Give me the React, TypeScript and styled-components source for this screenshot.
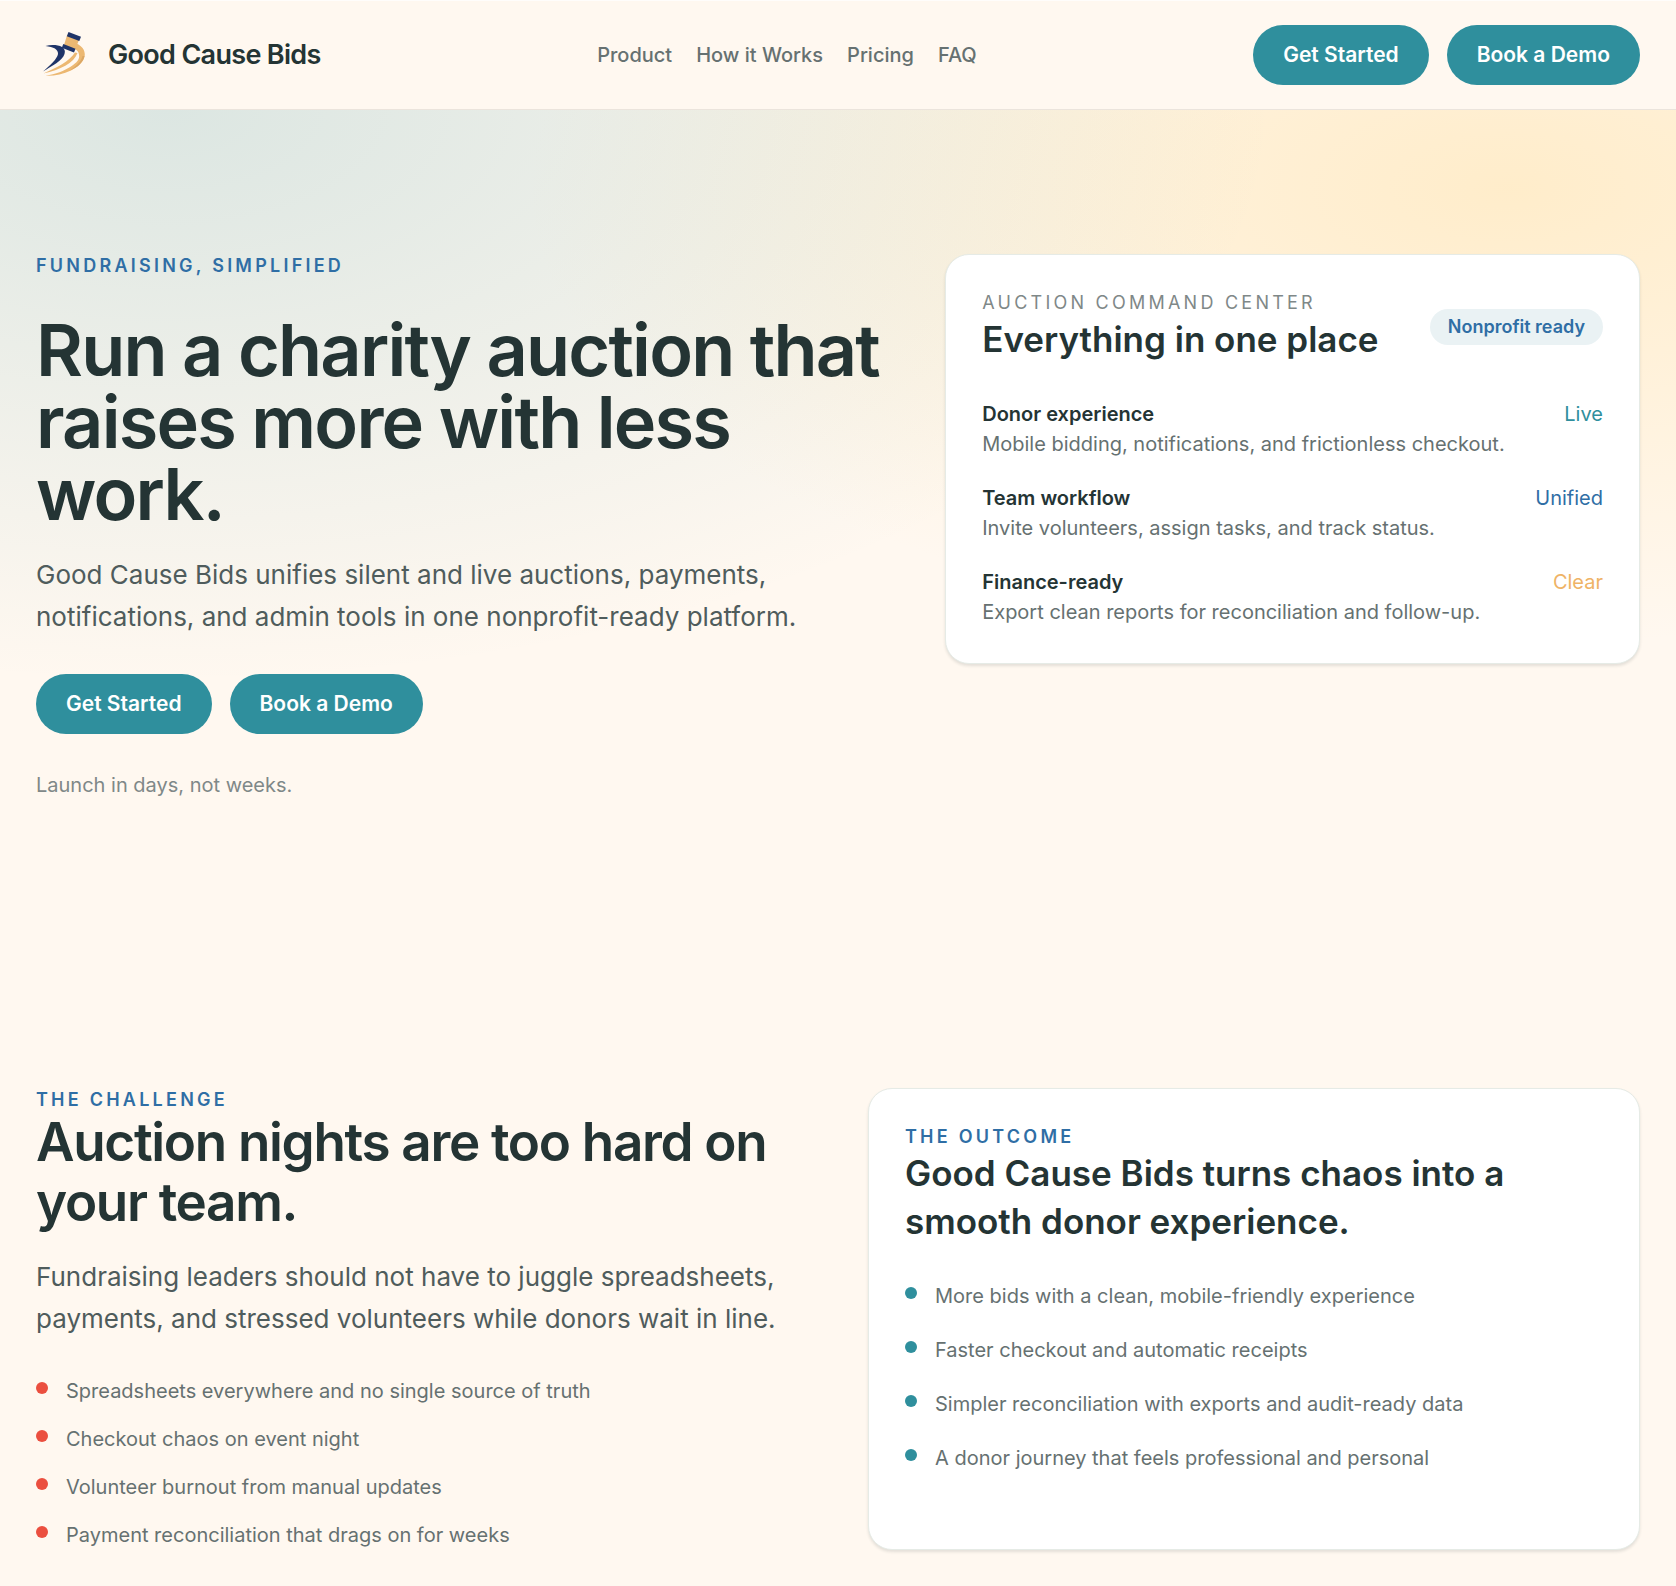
import React from "react";
import styled, { createGlobalStyle } from "styled-components";

const color = {
  page: "#fff8f0",
  ink: "#243434",
  body: "#4f5c5c",
  muted: "#667171",
  faint: "#7f8888",
  teal: "#2f8f9d",
  blue: "#2f6ea5",
  amber: "#efb366",
  red: "#eb4f3f",
  line: "#e6ebe6",
};

const GlobalStyle = createGlobalStyle`
  *, *::before, *::after { box-sizing: border-box; }
  body {
    margin: 0;
    background: ${color.page};
    color: ${color.ink};
    font-family: Inter, "Liberation Sans", sans-serif;
    font-size: 20px;
    line-height: 30px;
    -webkit-font-smoothing: antialiased;
  }
  h1, h2, h3, p, ul { margin: 0; padding: 0; }
`;

const Header = styled.header`
  display: flex;
  align-items: center;
  justify-content: space-between;
  gap: 24px;
  padding: 24px 36px;
  border-top: 1px solid #fffdfb;
  border-bottom: 1px solid #ebe4dc;
`;

const Brand = styled.a`
  display: flex;
  align-items: center;
  gap: 18px;
  color: ${color.ink};
  font-size: 27px;
  font-weight: 600;
  letter-spacing: -0.025em;
  text-decoration: none;
`;

const Nav = styled.nav`
  display: flex;
  gap: 24px;
`;

const NavLink = styled.a`
  color: ${color.muted};
  font-weight: 500;
  text-decoration: none;
`;

const Actions = styled.div`
  display: flex;
  flex-wrap: wrap;
  gap: 18px;
`;

const Button = styled.button`
  height: 60px;
  padding: 0 30px;
  border: 0;
  border-radius: 30px;
  background: ${color.teal};
  color: #fff;
  font: inherit;
  font-size: 21px;
  font-weight: 600;
  cursor: pointer;
`;

const Hero = styled.section`
  display: grid;
  grid-template-columns: 11fr 9fr;
  align-items: start;
  gap: 60px;
  padding: 144px 36px;
  background:
    radial-gradient(ellipse at 10% 0%, rgba(47, 143, 157, 0.17), rgba(47, 143, 157, 0) 52%),
    radial-gradient(ellipse at 90% 10%, rgba(255, 217, 138, 0.37), rgba(255, 217, 138, 0) 46%);
  background-size: 100% 780px;
  background-repeat: no-repeat;
`;

const Intro = styled.div`
  display: flex;
  flex-direction: column;
  gap: 36px;
`;

const Copy = styled.div`
  display: flex;
  flex-direction: column;
  gap: 24px;
`;

const Eyebrow = styled.p<{ $quiet?: boolean }>`
  color: ${(p) => (p.$quiet ? color.faint : color.blue)};
  font-size: 18px;
  line-height: 24px;
  font-weight: ${(p) => (p.$quiet ? 400 : 600)};
  letter-spacing: 0.18em;
  text-transform: uppercase;
`;

const Headline = styled.h1`
  font-size: 72px;
  line-height: 72px;
  font-weight: 600;
  letter-spacing: -0.025em;
`;

const SectionTitle = styled.h2`
  font-size: 53px;
  line-height: 60px;
  font-weight: 600;
  letter-spacing: -0.025em;
`;

const CardTitle = styled.h3`
  font-size: 35px;
  line-height: 48px;
  font-weight: 600;
`;

const Lead = styled.p`
  color: ${color.body};
  font-size: 26px;
  line-height: 42px;
`;

const Note = styled.p`
  color: ${color.faint};
`;

const Card = styled.article`
  display: flex;
  flex-direction: column;
  gap: 36px;
  padding: 36px;
  border: 1px solid ${color.line};
  border-radius: 24px;
  background: #fff;
  box-shadow: 0 2px 3px rgba(36, 52, 52, 0.12);
`;

const CardHead = styled.div`
  display: flex;
  align-items: center;
  justify-content: space-between;
  gap: 18px;
`;

const Pill = styled.span`
  padding: 6px 18px;
  border-radius: 18px;
  background: #eaf2f4;
  color: ${color.blue};
  font-size: 18px;
  line-height: 24px;
  font-weight: 600;
  white-space: nowrap;
`;

const FeatureList = styled.ul`
  display: flex;
  flex-direction: column;
  gap: 24px;
  list-style: none;
`;

const Feature = styled.li`
  display: flex;
  justify-content: space-between;
  gap: 18px;
`;

const FeatureName = styled.p`
  font-weight: 600;
`;

const FeatureText = styled.p`
  color: ${color.muted};
`;

const Status = styled.span<{ $tone: string }>`
  color: ${(p) => p.$tone};
`;

const Compare = styled.section`
  display: grid;
  grid-template-columns: 1fr 1fr;
  gap: 60px;
  padding: 144px 36px 36px;
`;

const BulletList = styled.ul<{ $gap: number }>`
  display: flex;
  flex-direction: column;
  gap: ${(p) => p.$gap}px;
  list-style: none;
`;

const Bullet = styled.li<{ $tone: string }>`
  display: flex;
  gap: 18px;
  color: ${color.muted};

  &::before {
    content: "";
    flex: none;
    width: 12px;
    height: 12px;
    margin-top: 6px;
    border-radius: 50%;
    background: ${(p) => p.$tone};
  }
`;

const Logo = () => (
  <svg width="54" height="54" viewBox="0 0 54 54" aria-hidden="true">
    <path
      d="M40.5 15.5 C46 18 49 22 48.8 27 C48 34 42 39 35 42.5 C27 46.500 18 48 9.500 47.700 C20 46 28 43 35 38.500 C41 34.500 44 31 43 26.500 C42.500 23.500 41 22 38.500 21Z"
      fill="#ecb872"
    />
    <path d="M48.6 28 C47 35 41 39.500 34 42.500 C40 38 45 34 46.500 28Z" fill="#dba765" />
    <path d="M41.500 25 C38 35 24 42 7.500 45.500 C20 40 34 33 39 24.500Z" fill="#ecb872" />
    <path
      d="M9.500 18 C15 16.500 22 16.800 26 19 C28.500 20.500 29.500 23 28.500 26 C26.500 32.500 16 38 7 43.500 C15 36.500 21 31 22 26 C22.500 21.500 17.500 18.800 9.500 18Z"
      fill="#1f3468"
    />
    <path d="M31 7.500 L43 12 L39 21.500 L28 17Z" fill="#ecb872" />
    <path d="M32.500 4 L45 8.700 L43.300 13 L30.800 8.300Z" fill="#1f3468" />
    <path d="M27.300 16 L39.500 20.700 L38 24.500 L25.800 19.800Z" fill="#1f3468" />
  </svg>
);

const nav = ["Product", "How it Works", "Pricing", "FAQ"];

const features = [
  {
    name: "Donor experience",
    text: "Mobile bidding, notifications, and frictionless checkout.",
    status: "Live",
    tone: color.teal,
  },
  {
    name: "Team workflow",
    text: "Invite volunteers, assign tasks, and track status.",
    status: "Unified",
    tone: color.blue,
  },
  {
    name: "Finance-ready",
    text: "Export clean reports for reconciliation and follow-up.",
    status: "Clear",
    tone: color.amber,
  },
];

const problems = [
  "Spreadsheets everywhere and no single source of truth",
  "Checkout chaos on event night",
  "Volunteer burnout from manual updates",
  "Payment reconciliation that drags on for weeks",
];

const outcomes = [
  "More bids with a clean, mobile-friendly experience",
  "Faster checkout and automatic receipts",
  "Simpler reconciliation with exports and audit-ready data",
  "A donor journey that feels professional and personal",
];

const CallToAction = () => (
  <Actions>
    <Button type="button">Get Started</Button>
    <Button type="button">Book a Demo</Button>
  </Actions>
);

export default function App() {
  return (
    <>
      <GlobalStyle />
      <Header>
        <Brand href="#">
          <Logo />
          Good Cause Bids
        </Brand>
        <Nav aria-label="Main">
          {nav.map((label) => (
            <NavLink key={label} href="#">
              {label}
            </NavLink>
          ))}
        </Nav>
        <CallToAction />
      </Header>
      <main>
        <Hero>
          <Intro>
            <Eyebrow>Fundraising, simplified</Eyebrow>
            <Copy>
              <Headline>Run a charity auction that raises more with less work.</Headline>
              <Lead>
                Good Cause Bids unifies silent and live auctions, payments, notifications, and
                admin tools in one nonprofit-ready platform.
              </Lead>
            </Copy>
            <CallToAction />
            <Note>Launch in days, not weeks.</Note>
          </Intro>
          <Card>
            <CardHead>
              <div>
                <Eyebrow $quiet>Auction command center</Eyebrow>
                <CardTitle as="h2">Everything in one place</CardTitle>
              </div>
              <Pill>Nonprofit ready</Pill>
            </CardHead>
            <FeatureList>
              {features.map((f) => (
                <Feature key={f.name}>
                  <div>
                    <FeatureName>{f.name}</FeatureName>
                    <FeatureText>{f.text}</FeatureText>
                  </div>
                  <Status $tone={f.tone}>{f.status}</Status>
                </Feature>
              ))}
            </FeatureList>
          </Card>
        </Hero>
        <Compare>
          <Intro>
            <Copy>
              <div>
                <Eyebrow>The challenge</Eyebrow>
                <SectionTitle>Auction nights are too hard on your team.</SectionTitle>
              </div>
              <Lead>
                Fundraising leaders should not have to juggle spreadsheets, payments, and stressed
                volunteers while donors wait in line.
              </Lead>
            </Copy>
            <BulletList $gap={18}>
              {problems.map((text) => (
                <Bullet key={text} $tone={color.red}>
                  {text}
                </Bullet>
              ))}
            </BulletList>
          </Intro>
          <Card>
            <div>
              <Eyebrow>The outcome</Eyebrow>
              <CardTitle>Good Cause Bids turns chaos into a smooth donor experience.</CardTitle>
            </div>
            <BulletList $gap={24}>
              {outcomes.map((text) => (
                <Bullet key={text} $tone={color.teal}>
                  {text}
                </Bullet>
              ))}
            </BulletList>
          </Card>
        </Compare>
      </main>
    </>
  );
}
